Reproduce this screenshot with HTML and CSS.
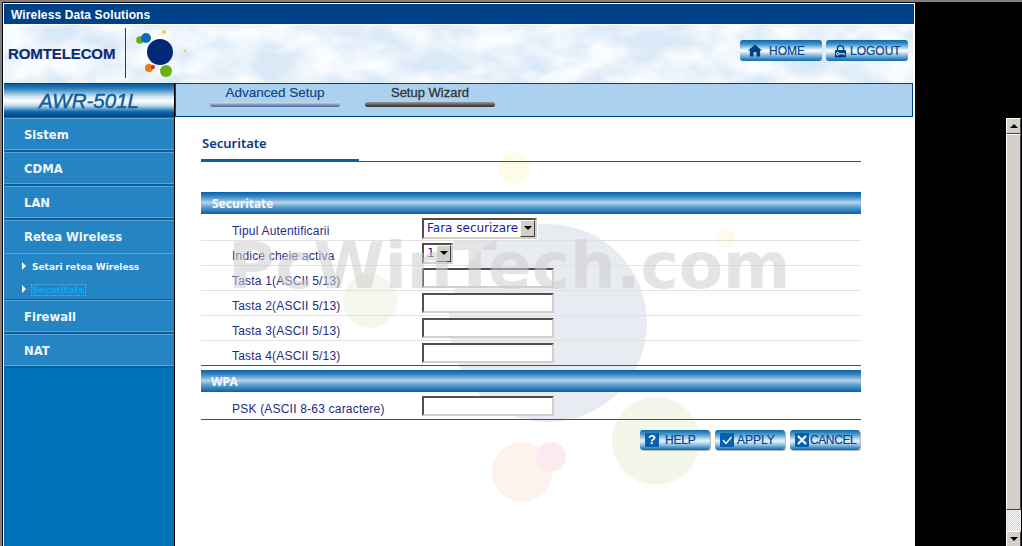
FILE: index.html
```html
<!DOCTYPE html>
<html lang="ro">
<head>
<meta charset="utf-8">
<title>Wireless Data Solutions</title>
<link rel="stylesheet" href="styles.css">
</head>
<body>
<div class="window">
  <div class="titlebar">Wireless Data Solutions</div>
  <header class="brand">
    <svg class="clouds" width="909" height="58" aria-hidden="true">
      <filter id="cloud2" x="0" y="0" width="100%" height="100%">
        <feTurbulence type="fractalNoise" baseFrequency="0.024 0.04" numOctaves="3" seed="11" result="n"/>
        <feColorMatrix in="n" type="matrix" values="0 0 0 0 0.96  0 0 0 0 0.98  0 0 0 0 1  2.4 0 0 0 -0.7"/>
      </filter>
      <rect width="909" height="58" fill="#dae9f7"/>
      <rect width="909" height="58" filter="url(#cloud2)"/>
    </svg>
    <div class="logo">
      <span class="logo-name">ROMTELECOM</span>
      <svg class="logo-mark" width="70" height="52" viewBox="0 0 70 52" aria-hidden="true">
        <rect x="0" y="0" width="1" height="50" fill="#1c3f7c"/>
        <circle cx="35" cy="24" r="13" fill="#002a78"/>
        <circle cx="15" cy="12" r="3.8" fill="#6aa81e"/>
        <circle cx="21" cy="10" r="5" fill="#0a6cb8"/>
        <circle cx="39" cy="4" r="2" fill="#fcd020"/>
        <circle cx="60" cy="23" r="1.2" fill="#fcd020"/>
        <circle cx="24" cy="40" r="4" fill="#f07810"/>
        <circle cx="28" cy="39" r="2" fill="#e02020"/>
        <circle cx="41" cy="43" r="6" fill="#6cb010"/>
      </svg>
    </div>
    <nav class="top-actions">
      <a class="btn btn-top btn-home" href="#">
        <svg width="14" height="13" viewBox="0 0 15 13" aria-hidden="true"><path d="M7.5 0 15 6.6h-2V13H9V8.5H6V13H2V6.6H0z" fill="#00428a"/></svg>
        <span>HOME</span>
      </a>
      <a class="btn btn-top btn-logout" href="#">
        <svg width="13" height="14" viewBox="0 0 14 14" aria-hidden="true"><path d="M3 6V4.5a4 4 0 0 1 8 0V6H9.6V4.5a2.6 2.6 0 0 0-5.2 0V6z" fill="#00428a"/><rect x="1" y="6" width="12" height="8" rx="1" fill="#00428a"/><circle cx="4" cy="10" r="1.4" fill="none" stroke="#fff"/><path d="M5.4 10H11V11.4" fill="none" stroke="#fff"/></svg>
        <span>LOGOUT</span>
      </a>
    </nav>
  </header>
  <div class="columns">
    <aside class="sidebar">
      <div class="model">AWR-501L</div>
      <ul class="menu">
        <li class="menu-item"><a href="#">Sistem</a></li>
        <li class="menu-item"><a href="#">CDMA</a></li>
        <li class="menu-item"><a href="#">LAN</a></li>
        <li class="menu-item menu-open"><a href="#">Retea Wireless</a></li>
        <li class="submenu">
          <a class="sub-link" href="#"><i class="tri"></i><span>Setari retea Wireless</span></a>
          <a class="sub-link sub-active" href="#"><i class="tri"></i><span>Securitate</span></a>
        </li>
        <li class="menu-item"><a href="#">Firewall</a></li>
        <li class="menu-item"><a href="#">NAT</a></li>
      </ul>
    </aside>
    <main class="main">
      <svg class="bubbles" width="738" height="429" viewBox="175 117 738 429" aria-hidden="true">
        <circle cx="548" cy="323" r="99" fill="#e9ebf3"/>
        <circle cx="514" cy="168" r="16" fill="#fefce9"/>
        <circle cx="725" cy="239" r="10" fill="#fefce9"/>
        <circle cx="370" cy="301" r="27" fill="#f4f8ec"/>
        <circle cx="656" cy="441" r="44" fill="#f2f7ea"/>
        <circle cx="522" cy="472" r="30" fill="#fdf2ec"/>
        <circle cx="551" cy="457" r="15" fill="#fdeaee"/>
      </svg>
      <div class="tabs">
        <a class="tab tab-blue" href="#">Advanced Setup</a>
        <a class="tab tab-dark" href="#">Setup Wizard</a>
      </div>
      <div class="content">
        <div class="page-title"><h1>Securitate</h1></div>
        <h2 class="section first">Securitate</h2>
        <div class="row">
          <label>Tipul Autentificarii</label>
          <span class="select select-wide"><select><option>Fara securizare</option></select><i class="arrow"></i></span>
        </div>
        <div class="row">
          <label>Indice cheie activa</label>
          <span class="select select-small"><select><option>1</option></select><i class="arrow"></i></span>
        </div>
        <div class="row"><label>Tasta 1(ASCII 5/13)</label><input type="text"></div>
        <div class="row"><label>Tasta 2(ASCII 5/13)</label><input type="text"></div>
        <div class="row"><label>Tasta 3(ASCII 5/13)</label><input type="text"></div>
        <div class="row row-end"><label>Tasta 4(ASCII 5/13)</label><input type="text"></div>
        <h2 class="section second">WPA</h2>
        <div class="row row-end row-psk"><label>PSK (ASCII 8-63 caractere)</label><input type="text"></div>
        <div class="actions">
          <a class="btn btn-act" href="#"><span class="ico ico-text">?</span><span class="btn-label-help">HELP</span></a>
          <a class="btn btn-act" href="#"><span class="ico"><svg width="14" height="14" viewBox="0 0 14 14" aria-hidden="true"><path d="M3 7l3 3.5L11.5 4" fill="none" stroke="#fff" stroke-width="1.4"/></svg></span><span>APPLY</span></a>
          <a class="btn btn-act btn-cancel" href="#"><span class="ico"><svg width="14" height="14" viewBox="0 0 14 14" aria-hidden="true"><path d="M3 3l8 8M11 3l-8 8" fill="none" stroke="#fff" stroke-width="2.2"/></svg></span><span>CANCEL</span></a>
        </div>
      </div>
      <div class="watermark">PcWinTech.com</div>
    </main>
  </div>
</div>
<div class="scrollbar" aria-hidden="true">
  <div class="sb-btn"><i class="sb-up"></i></div>
  <div class="sb-thumb"></div>
  <div class="sb-track"></div>
  <div class="sb-btn"><i class="sb-down"></i></div>
</div>
</body>
</html>
```
FILE: styles.css
```css
* { box-sizing: border-box; }
html, body { height: 546px; overflow: hidden; }
body {
  margin: 0;
  background: #000;
  border-top: 2px solid #808080;
  border-left: 2px solid #808080;
  padding: 1px 0 0 1px;
  display: flex;
  align-items: stretch;
  font-family: "Liberation Sans", Arial, sans-serif;
}
a { text-decoration: none; color: inherit; }

.window {
  width: 912px;
  flex: none;
  background: #fff;
  border: 1px solid #fff;
  border-bottom: 0;
  display: flex;
  flex-direction: column;
}
.titlebar {
  height: 20px;
  margin-bottom: 1px;
  background: #00428a;
  color: #fff;
  font-size: 12px;
  letter-spacing: 0.12px;
  font-weight: bold;
  line-height: 23px;
  padding-left: 7px;
}
.brand {
  height: 58px;
  width: 909px;
  position: relative;
  display: flex;
  justify-content: space-between;
  align-items: center;
  overflow: hidden;
}
.clouds { position: absolute; left: 0; top: 0; }
.logo { position: relative; display: flex; align-items: center; padding-left: 4px; height: 58px; }
.logo-name {
  color: #0c2c78;
  font-weight: bold;
  font-size: 15px;
  letter-spacing: -0.1px;
  -webkit-text-stroke: 0.2px #0c2c78;
  width: 117px;
  white-space: nowrap;
  padding-bottom: 2px;
}
.logo-mark { margin-top: 0; }
.top-actions { position: relative; display: flex; gap: 4px; padding: 0 5px 8px 0; }

.btn {
  display: flex;
  align-items: center;
  border-radius: 3px;
  color: #0b4391;
  -webkit-text-stroke: 0.2px #0b4391;
  background: linear-gradient(#0868ae 0%, #3f92c8 20%, #dfeef8 45%, #ffffff 52%, #8dbfe0 72%, #0868ae 100%);
}
.btn-top { width: 82px; height: 21px; font-size: 12px; padding-top: 1px; }
.btn-home { padding-left: 8px; gap: 7px; }
.btn-logout { padding-left: 8px; gap: 3px; }
.btn-act {
  width: 70px;
  height: 20px;
  font-size: 12px;
  padding-left: 5px;
  gap: 3px;
  box-shadow: 1px 1px 0 #b4b8bc;
  background: linear-gradient(#0868ae 0%, #4d9acc 22%, #cfe4f2 48%, #e8f3fa 55%, #8dbfe0 75%, #0868ae 100%);
}
.btn-label-help { margin-left: 3px; letter-spacing: -0.2px; }
.btn-cancel { gap: 1px; letter-spacing: -0.4px; }
.ico {
  width: 14px;
  height: 14px;
  flex: none;
  background: #0660ae;
  display: inline-flex;
  border-radius: 1px;
  color: #fff;
  -webkit-text-stroke: 0;
}
.ico-text { font-weight: bold; font-size: 13px; line-height: 14px; justify-content: center; }

.columns { flex: 1; display: flex; min-height: 0; width: 910px; }
.sidebar {
  width: 171px;
  flex: none;
  background: #0070b8;
  border-right: 1px solid #000;
}
.model {
  height: 34px;
  text-align: center;
  font-size: 20.5px;
  font-style: italic;
  line-height: 34px;
  color: #0f5c9f;
  -webkit-text-stroke: 0.45px #0f5c9f;
  background: linear-gradient(#0a5aa0 0%, #2a7fbc 14%, #cfe4f3 38%, #ffffff 52%, #bcd9ec 66%, #0a6ab0 84%, #00407c 100%);
  border-top: 1px solid #00428a;
}
.menu {
  list-style: none;
  margin: 1px 0 0;
  padding: 0;
  font-family: "DejaVu Sans", Verdana, sans-serif;
  color: #f2f6fb;
}
.menu-item {
  height: 34px;
  background: #2484c4;
  border-top: 1px solid #5aa5d8;
  border-bottom: 2px solid #0a609c;
  box-shadow: inset 0 -1px 0 #5aa5d8;
  font-size: 11.6px;
  font-weight: bold;
  line-height: 32px;
  padding-left: 20px;
}
.menu-open { border-bottom: 0; }
.submenu {
  height: 46px;
  background: #2484c4;
  padding: 1px 0 0 18px;
  font-size: 9px;
  font-weight: bold;
  border-bottom: 1px solid #0a609c;
}
.sub-link { display: flex; align-items: center; height: 23px; }
.tri {
  width: 0;
  height: 0;
  border-left: 4px solid #fff;
  border-top: 4px solid transparent;
  border-bottom: 4px solid transparent;
  margin-right: 6px;
  position: relative;
  top: -1px;
}
.sub-active { color: #10a4f4; }
.sub-active span { outline: 1px dotted #e08a40; }

.main { flex: 1; position: relative; min-width: 0; overflow: hidden; }
.bubbles { position: absolute; left: 0; top: 34px; }
.tabs {
  position: relative;
  height: 34px;
  background: #abd1ee;
  border: 1px solid #00428a;
  margin-right: 1px;
  display: flex;
  padding-left: 34px;
  gap: 25px;
}
.tab {
  width: 130px;
  height: 23px;
  text-align: center;
  font-size: 13.5px;
  line-height: 17px;
  position: relative;
}
.tab::after {
  content: "";
  position: absolute;
  left: 0;
  right: 0;
  bottom: 0;
  height: 5px;
  border-radius: 3px;
}
.tab-blue { color: #0c4488; -webkit-text-stroke: 0.15px #0c4488; }
.tab-blue::after { background: linear-gradient(#d8e4f0, #8a9cc0 50%, #3f6aa0); }
.tab-dark { color: #333; font-size: 13px; -webkit-text-stroke: 0.3px #333; }
.tab-dark::after { background: linear-gradient(#9a9a9a, #606060 50%, #2c2c2c); }

.content { position: relative; width: 660px; margin-left: 26px; }
.page-title {
  height: 45px;
  border-bottom: 1px solid #0660ae;
}
.page-title h1 {
  margin: 0;
  width: 158px;
  height: 45px;
  border-bottom: 3px solid #0660ae;
  font-size: 13px;
  font-weight: 600;
  font-family: "Noto Sans", Verdana, sans-serif;
  line-height: 53px;
  padding-left: 1px;
  color: #0a3a80;
}
.section {
  margin: 0;
  height: 22px;
  padding-left: 11px;
  font-family: "Noto Sans", Verdana, sans-serif;
  font-size: 12px;
  font-weight: bold;
  line-height: 23px;
  color: #f2f6fb;
  background: linear-gradient(#0660ae 0%, #3d8ac4 22%, #b4d4ea 48%, #5ca0d0 68%, #0660ae 100%);
}
.section.first { margin-top: 30px; margin-bottom: 2px; }
.section.second { margin-top: 4px; margin-bottom: 1px; padding-left: 10px; }
.row {
  height: 25px;
  display: flex;
  align-items: center;
  border-bottom: 1px solid #e2e2e2;
}
.row-end { border-bottom-color: #0a6480; }
.row-psk { height: 27px; }
.row label {
  width: 221px;
  padding-left: 31px;
  font-family: "Liberation Sans", Arial, sans-serif;
  font-size: 12px;
  letter-spacing: 0.2px;
  color: #1e2c82;
  flex: none;
  padding-top: 5px;
}
.row input {
  width: 132px;
  height: 20px;
  background: #fff;
  border: 2px solid;
  border-color: #505050 #d4d0c8 #d4d0c8 #505050;
  padding: 0;
  margin: 0;
}
.select {
  position: relative;
  display: block;
  height: 21px;
  background: #fff;
}
.select select {
  appearance: none;
  width: 100%;
  height: 100%;
  display: block;
  border: 2px solid;
  border-color: #505050 #d4d0c8 #d4d0c8 #505050;
  outline: 1px solid #fff;
  background: #fff;
  padding: 0 0 0 3px;
  font-family: "DejaVu Sans", Verdana, sans-serif;
  font-size: 12px;
  color: #1a1a9a;
}
.select-wide { width: 115px; }
.select-small { width: 31px; }
.arrow {
  position: absolute;
  right: 2px;
  top: 2px;
  width: 15px;
  height: 17px;
  background: #d4d0c8;
  border: 1px solid;
  border-color: #fff #404040 #404040 #fff;
}
.arrow::after {
  content: "";
  position: absolute;
  left: 3px;
  top: 5px;
  border-top: 4px solid #000;
  border-left: 4px solid transparent;
  border-right: 4px solid transparent;
}
.actions { display: flex; justify-content: flex-end; gap: 5px; margin-top: 10px; padding-right: 1px; }

.watermark {
  position: absolute;
  left: 53px;
  top: 146px;
  font-family: "DejaVu Sans", Verdana, sans-serif;
  font-size: 64.5px;
  font-weight: bold;
  line-height: 74px;
  white-space: nowrap;
  color: rgba(205,205,205,0.55);
  pointer-events: none;
}

.scrollbar {
  margin: 115px 0 0 91px;
  width: 15px;
  height: 429px;
  flex: none;
  display: flex;
  flex-direction: column;
  background: #d4d0c8;
}
.sb-btn {
  height: 16px;
  flex: none;
  background: #d4d0c8;
  border: 1px solid;
  border-color: #fff #404040 #404040 #fff;
  display: flex;
  align-items: center;
  justify-content: center;
}
.sb-up { border-bottom: 4px solid #000; border-left: 4px solid transparent; border-right: 4px solid transparent; }
.sb-down { border-top: 4px solid #000; border-left: 4px solid transparent; border-right: 4px solid transparent; }
.sb-thumb {
  height: 376px;
  flex: none;
  background: #d4d0c8;
  border: 1px solid;
  border-color: #fff #404040 #404040 #fff;
}
.sb-track {
  flex: 1;
  background-color: #fff;
  background-image: repeating-conic-gradient(#d4d0c8 0 25%, #fff 0 50%);
  background-size: 2px 2px;
}
```
